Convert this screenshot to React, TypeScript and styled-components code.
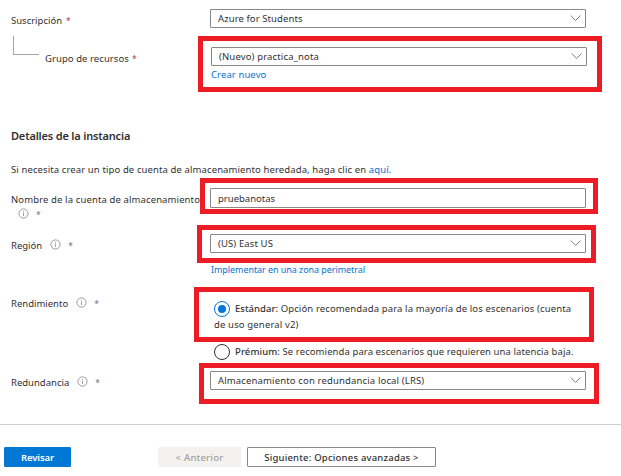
import React from 'react';
import styled, { createGlobalStyle } from 'styled-components';

const GlobalStyle = createGlobalStyle`
  *, *::before, *::after { box-sizing: border-box; }
  body {
    margin: 0;
    background: #fff;
    color: #323130;
    font: 400 9.5px/15px "Noto Sans", "Open Sans", sans-serif;
  }
`;

const Page = styled.main`
  display: flex;
  flex-direction: column;
  width: 621px;
  height: 476px;
  overflow: hidden;
`;

const Row = styled.section<{ $height: number }>`
  display: grid;
  grid-template-columns: 194px 1fr;
  align-items: start;
  height: ${(p) => p.$height}px;
`;

const Label = styled.div<{ $top: number; $indent?: number }>`
  display: flex;
  flex-wrap: wrap;
  align-items: flex-start;
  padding: ${(p) => p.$top}px 0 0 ${(p) => p.$indent ?? 11}px;
  white-space: nowrap;
`;

const TreeLabel = styled.div`
  display: flex;
  align-items: flex-start;
  padding-left: 13px;
  white-space: nowrap;
`;

const Branch = styled.span`
  width: 26px;
  height: 19px;
  margin-right: 6px;
  border: solid #a6a6a6;
  border-width: 0 0 1px 1px;
`;

const TreeText = styled.div`
  display: flex;
  padding-top: 15px;
`;

const Text = styled.span<{ $track?: number }>`
  letter-spacing: ${(p) => p.$track ?? 0}px;
  white-space: nowrap;
`;

const Strong = styled(Text)`
  font-weight: 500;
`;

const Star = styled.span<{ $gap?: number; $muted?: boolean }>`
  margin-left: ${(p) => p.$gap ?? 7}px;
  color: ${(p) => (p.$muted ? '#80608a' : '#a4363f')};
  font-size: 8.5px;
`;

const InfoSvg = styled.svg<{ $gap: number }>`
  display: block;
  width: 11px;
  height: 11px;
  margin-top: 1px;
  margin-left: ${(p) => p.$gap}px;
`;

const Column = styled.div`
  display: flex;
  flex-direction: column;
  align-items: flex-start;
`;

const Plain = styled.div`
  padding: 9px 0 0 16px;
`;

const Marker = styled.div<{ $left: number; $width: number; $height: number; $pad: string }>`
  flex: none;
  width: ${(p) => p.$width}px;
  height: ${(p) => p.$height}px;
  margin-left: ${(p) => p.$left}px;
  padding: ${(p) => p.$pad};
  border: 5px solid #ed1c24;
  background: #fff;
`;

const Field = styled.div<{ $height?: number }>`
  display: flex;
  justify-content: space-between;
  width: 376px;
  height: ${(p) => p.$height ?? 19}px;
  padding: ${(p) => (p.$height ? 2 : 1)}px 4px 0 7px;
  border: 1px solid #8a8886;
  border-radius: 1px;
`;

const ChevronSvg = styled.svg`
  display: block;
  width: 12px;
  height: 15px;
`;

const Link = styled.a<{ $track?: number; $size?: number }>`
  color: #0873cf;
  font-size: ${(p) => p.$size ?? 9.5}px;
  letter-spacing: ${(p) => p.$track ?? 0}px;
  text-decoration: none;
`;

const GroupLink = styled(Link)`
  display: block;
  margin-top: 1px;
`;

const ZoneLink = styled(Link)`
  margin: -1px 0 0 17px;
`;

const Intro = styled.section`
  height: 86px;
  padding: 36px 0 0 11px;
`;

const Heading = styled.h2`
  margin: 0 0 19px;
  font-size: 11px;
  font-weight: 600;
  line-height: 15px;
  letter-spacing: -0.18px;
`;

const Paragraph = styled.p`
  margin: 0;
  letter-spacing: 0.11px;
`;

const Option = styled.div`
  display: flex;
  align-items: flex-start;
  height: 16px;
`;

const PremiumOption = styled(Option)`
  margin: 2px 0 0 20px;
`;

const Radio = styled.span<{ $checked?: boolean }>`
  display: grid;
  place-items: center;
  width: 16px;
  height: 16px;
  margin-right: 5px;
  border: 1px solid ${(p) => (p.$checked ? '#0078d4' : '#323130')};
  border-radius: 50%;

  &::after {
    content: "";
    width: 8px;
    height: 8px;
    border-radius: 50%;
    background: ${(p) => (p.$checked ? '#0078d4' : 'transparent')};
  }
`;

const Footer = styled.footer`
  display: flex;
  align-items: flex-start;
  height: 52px;
  padding: 22px 0 0 4px;
  border-top: 1px solid #d0d0d0;
`;

const Button = styled.button<{ $kind: 'primary' | 'disabled' | 'normal'; $width: number; $gap?: number; $track?: number }>`
  width: ${(p) => p.$width}px;
  height: 20px;
  margin: 0 0 0 ${(p) => p.$gap ?? 0}px;
  padding: 1px 0 0;
  border: 1px solid ${(p) => ({ primary: '#0078d4', disabled: '#f3f2f1', normal: '#8a8886' })[p.$kind]};
  border-radius: 1px;
  background: ${(p) => ({ primary: '#0078d4', disabled: '#f3f2f1', normal: '#fff' })[p.$kind]};
  color: ${(p) => ({ primary: '#fff', disabled: '#a19f9d', normal: '#323130' })[p.$kind]};
  font: ${(p) => (p.$kind === 'primary' ? 600 : 500)} 9.5px/15px "Noto Sans", sans-serif;
  letter-spacing: ${(p) => p.$track ?? 0}px;
  white-space: nowrap;
`;

const Info = ({ gap = 8 }: { gap?: number }) => (
  <InfoSvg $gap={gap} viewBox="0 0 11 11" fill="none">
    <circle cx="5.5" cy="5.5" r="4.6" stroke="#858288" strokeWidth="0.8" />
    <path d="M5.5 4.7v3.2M5.5 3v0.9" stroke="#858288" strokeWidth="0.8" />
  </InfoSvg>
);

const Chevron = () => (
  <ChevronSvg viewBox="0 0 12 15" fill="none">
    <path d="M1.7 4.5L6.6 9.4l4.9-4.9" stroke="#706e6c" strokeWidth="0.9" />
  </ChevronSvg>
);

const Select = ({ value, track }: { value: string; track: number }) => (
  <Field>
    <Text $track={track}>{value}</Text>
    <Chevron />
  </Field>
);

export default function App() {
  return (
    <Page>
      <GlobalStyle />
      <Row $height={36}>
        <Label $top={13}>
          <Text>Suscripción</Text>
          <Star $gap={4}>*</Star>
        </Label>
        <Plain>
          <Select value="Azure for Students" track={0.09} />
        </Plain>
      </Row>

      <Row $height={56}>
        <TreeLabel>
          <Branch />
          <TreeText>
            <Text $track={0.07}>Grupo de recursos</Text>
            <Star $gap={3}>*</Star>
          </TreeText>
        </TreeLabel>
        <Marker $left={4} $width={404} $height={56} $pad="6px 0 0 8px">
          <Select value="(Nuevo) practica_nota" track={0.15} />
          <GroupLink $track={0.1}>Crear nuevo</GroupLink>
        </Marker>
      </Row>

      <Intro>
        <Heading>Detalles de la instancia</Heading>
        <Paragraph>
          Si necesita crear un tipo de cuenta de almacenamiento heredada, haga clic en{' '}
          <Link $track={0.11}>aquí</Link>.
        </Paragraph>
      </Intro>

      <Row $height={47}>
        <Label $top={14}>
          <Text $track={0.12}>Nombre de la cuenta de almacenamiento</Text>
          <Info gap={7} />
          <Star $muted>*</Star>
        </Label>
        <Marker $left={6} $width={398} $height={36} $pad="5px 0 0 5px">
          <Field $height={20}>
            <Text>pruebanotas</Text>
          </Field>
        </Marker>
      </Row>

      <Row $height={62}>
        <Label $top={13}>
          <Text>Región</Text>
          <Info />
          <Star $muted>*</Star>
        </Label>
        <Column>
          <Marker $left={3} $width={399} $height={38} $pad="4px 0 0 8px">
            <Select value="(US) East US" track={0.12} />
          </Marker>
          <ZoneLink $size={9} $track={-0.065}>Implementar en una zona perimetral</ZoneLink>
        </Column>
      </Row>

      <Row $height={76}>
        <Label $top={9}>
          <Text>Rendimiento</Text>
          <Info />
          <Star $muted>*</Star>
        </Label>
        <Column>
          <Marker $left={0} $width={400} $height={55} $pad="9px 0 0 15px">
            <Option>
              <Radio $checked />
              <Strong $track={0.02}>Estándar:</Strong>
              <Text $track={0.127}>&nbsp;Opción recomendada para la mayoría de los escenarios (cuenta</Text>
            </Option>
            <Text $track={0.15}>de uso general v2)</Text>
          </Marker>
          <PremiumOption>
            <Radio />
            <Strong $track={0.1}>Prémium:</Strong>
            <Text $track={0.09}>&nbsp;Se recomienda para escenarios que requieren una latencia baja.</Text>
          </PremiumOption>
        </Column>
      </Row>

      <Row $height={61}>
        <Label $top={12}>
          <Text>Redundancia</Text>
          <Info />
          <Star $muted>*</Star>
        </Label>
        <Marker $left={5} $width={400} $height={41} $pad="3px 0 0 6px">
          <Select value="Almacenamiento con redundancia local (LRS)" track={0.15} />
        </Marker>
      </Row>

      <Footer>
        <Button $kind="primary" $width={67} $track={-0.1}>Revisar</Button>
        <Button $kind="disabled" $width={83} $gap={87} $track={0.22} disabled>&lt; Anterior</Button>
        <Button $kind="normal" $width={189} $gap={6} $track={0.2}>Siguiente: Opciones avanzadas &gt;</Button>
      </Footer>
    </Page>
  );
}
